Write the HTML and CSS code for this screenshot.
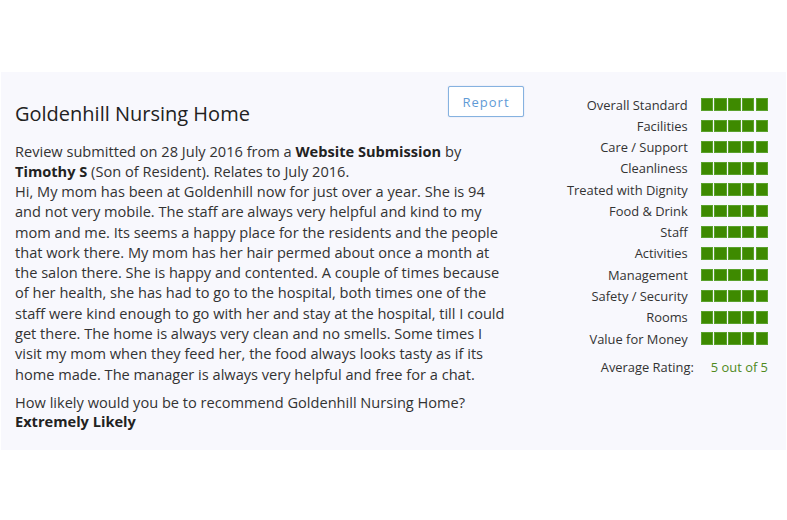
FILE: index.html
```html
<!DOCTYPE html>
<html>
<head>
<meta charset="utf-8">
<link rel="stylesheet" href="styles.css">
</head>
<body>
<div class="panel">
  <div class="review">
    <div class="review-head">
      <h1 class="title">Goldenhill Nursing Home</h1>
      <button class="report">Report</button>
    </div>
    <p class="meta">Review submitted on 28 July 2016 from a <b>Website Submission</b> by <b>Timothy S</b> (Son of Resident). Relates to July 2016.</p>
    <p class="body">Hi, My mom has been at Goldenhill now for just over a year. She is 94 and not very mobile. The staff are always very helpful and kind to my mom and me. Its seems a happy place for the residents and the people that work there. My mom has her hair permed about once a month at the salon there. She is happy and contented. A couple of times because of her health, she has had to go to the hospital, both times one of the staff were kind enough to go with her and stay at the hospital, till I could get there. The home is always very clean and no smells. Some times I visit my mom when they feed her, the food always looks tasty as if its home made. The manager is always very helpful and free for a chat.</p>
    <p class="recommend">How likely would you be to recommend Goldenhill Nursing Home?<br><b>Extremely Likely</b></p>
  </div>
  <div class="ratings">
    <div class="rating"><span class="label">Overall Standard</span><span class="boxes"><i></i><i></i><i></i><i></i><i></i></span></div>
    <div class="rating"><span class="label">Facilities</span><span class="boxes"><i></i><i></i><i></i><i></i><i></i></span></div>
    <div class="rating"><span class="label">Care / Support</span><span class="boxes"><i></i><i></i><i></i><i></i><i></i></span></div>
    <div class="rating"><span class="label">Cleanliness</span><span class="boxes"><i></i><i></i><i></i><i></i><i></i></span></div>
    <div class="rating"><span class="label">Treated with Dignity</span><span class="boxes"><i></i><i></i><i></i><i></i><i></i></span></div>
    <div class="rating"><span class="label">Food &amp; Drink</span><span class="boxes"><i></i><i></i><i></i><i></i><i></i></span></div>
    <div class="rating"><span class="label">Staff</span><span class="boxes"><i></i><i></i><i></i><i></i><i></i></span></div>
    <div class="rating"><span class="label">Activities</span><span class="boxes"><i></i><i></i><i></i><i></i><i></i></span></div>
    <div class="rating"><span class="label">Management</span><span class="boxes"><i></i><i></i><i></i><i></i><i></i></span></div>
    <div class="rating"><span class="label">Safety / Security</span><span class="boxes"><i></i><i></i><i></i><i></i><i></i></span></div>
    <div class="rating"><span class="label">Rooms</span><span class="boxes"><i></i><i></i><i></i><i></i><i></i></span></div>
    <div class="rating"><span class="label">Value for Money</span><span class="boxes"><i></i><i></i><i></i><i></i><i></i></span></div>
    <div class="average"><span class="avg-label">Average Rating:</span><span class="avg-value">5 out of 5</span></div>
  </div>
</div>
</body>
</html>
```
FILE: styles.css
```css
html, body {
  margin: 0;
  padding: 0;
  background: #ffffff;
}
body {
  font-family: "Open Sans", "Liberation Sans", sans-serif;
  color: #333333;
}
.panel {
  margin: 72px 0 0 1px;
  width: 785px;
  height: 378px;
  background: #f8f8fd;
  display: flex;
}
.review {
  width: 509px;
  padding: 14px 0 0 14px;
  box-sizing: content-box;
}
.review-head {
  display: flex;
  justify-content: space-between;
  align-items: flex-start;
}
.title {
  margin: 16px 0 0 0;
  font-size: 20px;
  line-height: 24px;
  font-weight: 400;
  color: #222222;
}
.report {
  width: 76px;
  height: 31px;
  background: #ffffff;
  border: 1px solid #86b2e0;
  border-radius: 2px;
  box-shadow: 0 0 1px rgba(80,130,200,0.5);
  color: #5f9bd6;
  font-family: "Open Sans", "Liberation Sans", sans-serif;
  font-size: 13px;
  letter-spacing: 1px;
  padding: 0;
}
.meta {
  margin: 15px 0 0 0;
  font-size: 14.6px;
  line-height: 20px;
  width: 490px;
}
.meta b, .recommend b {
  font-weight: 700;
  color: #222222;
}
.body {
  margin: 0;
  font-size: 14.6px;
  line-height: 20.3px;
  width: 492px;
}
.recommend {
  margin: 9px 0 0 0;
  font-size: 14.6px;
  line-height: 19px;
}
.ratings {
  flex: 1;
  padding: 22px 18px 0 0;
  display: flex;
  flex-direction: column;
  align-items: flex-end;
}
.rating {
  height: 21.27px;
  display: flex;
  align-items: center;
  gap: 13px;
}
.label {
  font-size: 12.9px;
  color: #333333;
}
.boxes {
  display: flex;
  gap: 1.2px;
}
.boxes i {
  display: block;
  width: 12.5px;
  height: 12.5px;
  background: #3e8a00;
  box-shadow: inset 0 0 0 1px #5aa12c;
}
.average {
  margin-top: 9px;
  display: flex;
  align-items: center;
  gap: 17px;
  font-size: 12.9px;
}
.avg-label {
  color: #333333;
}
.avg-value {
  color: #4f8a1c;
}
```
